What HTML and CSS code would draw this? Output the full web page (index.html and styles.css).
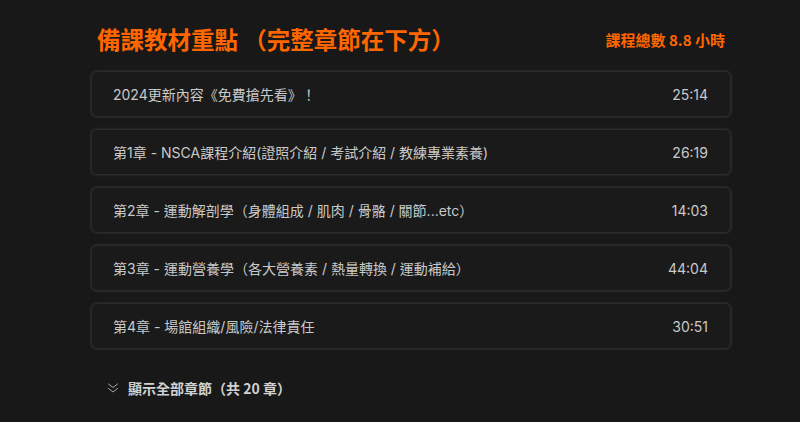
FILE: index.html
```html
<!DOCTYPE html>
<html lang="zh-Hant">
<head>
<meta charset="utf-8">
<link rel="stylesheet" href="styles.css">
</head>
<body>
<div class="wrap">
  <div class="header">
    <h1 class="title">備課教材重點 （完整章節在下方）</h1>
    <div class="total">課程總數 8.8 小時</div>
  </div>
  <div class="list">
    <div class="item"><span class="name">2024更新內容《免費搶先看》！</span><span class="time">25:14</span></div>
    <div class="item"><span class="name">第1章 - NSCA課程介紹(證照介紹 / 考試介紹 / 教練專業素養)</span><span class="time">26:19</span></div>
    <div class="item"><span class="name">第2章 - 運動解剖學（身體組成 / 肌肉 / 骨骼 / 關節...etc）</span><span class="time">14:03</span></div>
    <div class="item"><span class="name">第3章 - 運動營養學（各大營養素 / 熱量轉換 / 運動補給）</span><span class="time">44:04</span></div>
    <div class="item"><span class="name">第4章 - 場館組織/風險/法律責任</span><span class="time">30:51</span></div>
  </div>
  <div class="more">
    <svg class="chev" width="12" height="12" viewBox="0 0 12 12" fill="none" stroke="#a8a8a8" stroke-width="1" stroke-linecap="round" stroke-linejoin="round"><path d="M1.5 2 L6 5.5 L10.5 2"/><path d="M1.5 6.5 L6 10 L10.5 6.5"/></svg>
    <span>顯示全部章節（共 20 章）</span>
  </div>
</div>
</body>
</html>
```
FILE: styles.css
```css
html, body {
  margin: 0;
  padding: 0;
  background: #181818;
}
body {
  font-family: "Inter", "Noto Sans CJK TC", sans-serif;
  color: #cfcfcf;
}
.wrap {
  width: 640px;
  margin-left: 91px;
  padding-top: 22px;
}
.header {
  display: flex;
  justify-content: space-between;
  align-items: center;
  padding: 0 6px;
  height: 34px;
  margin-bottom: 15px;
}
.title {
  margin: 0;
  font-family: "Noto Sans CJK TC", sans-serif;
  font-size: 23.5px;
  font-weight: 700;
  color: #ff6600;
  line-height: 34px;
}
.total {
  font-family: "Noto Sans CJK TC", sans-serif;
  font-size: 15px;
  font-weight: 700;
  color: #ff6600;
}
.list {
  display: flex;
  flex-direction: column;
  gap: 12px;
}
.item {
  height: 44px;
  border: 1px solid #2c2c2c;
  border-radius: 6px;
  background: #1a1a1a;
  box-shadow: 0 0 2px 1px rgba(255, 255, 255, 0.07);
  display: flex;
  align-items: center;
  justify-content: space-between;
  padding: 0 22px 0 21px;
  font-size: 14px;
  color: #c9c9c9;
}
.more {
  display: flex;
  align-items: center;
  gap: 9px;
  margin-top: 29px;
  padding-left: 16px;
  font-family: "Noto Sans CJK TC", sans-serif;
  font-size: 14px;
  font-weight: 700;
  color: #d2d2d2;
}
```
